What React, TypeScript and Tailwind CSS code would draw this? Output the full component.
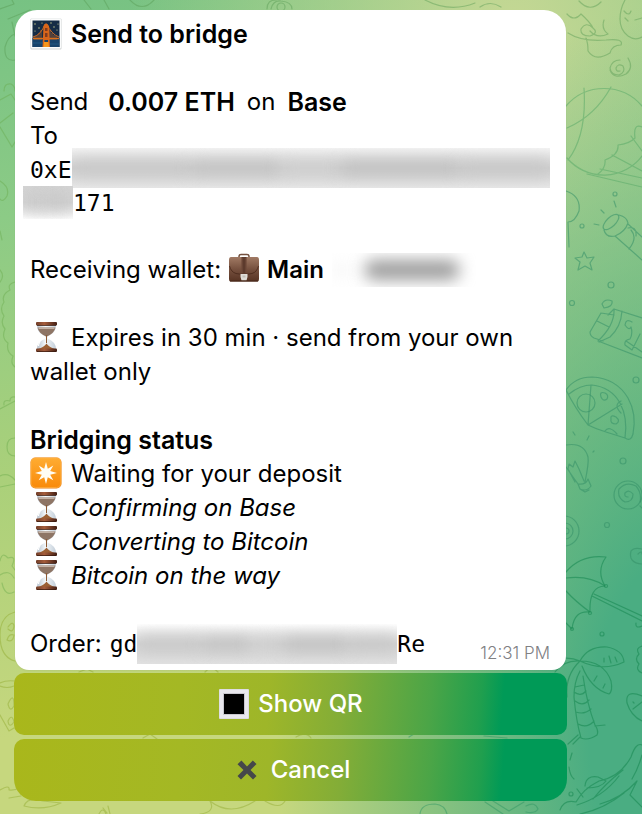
import type { ReactNode } from 'react';
import clsx from 'clsx';

const steps = ['Confirming on Base', 'Converting to Bitcoin', 'Bitcoin on the way'];

const emojiClass = '-mt-1 mb-px inline-block h-8 w-8 shrink-0 align-middle';

function BridgeEmoji() {
  return (
    <svg viewBox="0 0 32 32" className={clsx(emojiClass, 'mr-[9px]')} aria-hidden="true">
      <rect x="0.5" y="0.500" width="31" height="31" rx="1" fill="#d0d4d4" />
      <rect x="1" y="0.500" width="30" height="30" rx="1" fill="#fafbfb" />
      <rect x="2.5" y="2.500" width="27" height="26.5" fill="#152c46" />
      <rect x="2.5" y="20" width="27" height="9" fill="#17436b" />
      <g fill="#d0d394">
        <circle cx="5" cy="6" r="0.7" /><circle cx="9" cy="10" r="0.7" /><circle cx="12" cy="5" r="0.6" />
        <circle cx="21" cy="5" r="0.7" /><circle cx="24" cy="9" r="0.7" /><circle cx="28" cy="6" r="0.6" />
        <circle cx="27" cy="12" r="0.6" /><circle cx="5" cy="13" r="0.6" />
      </g>
      <g stroke="#c86a27" fill="none">
        <path d="M3 19Q11 17 15 6M17 6Q21 16 29 19" strokeWidth="1" />
        <path d="M5 18v4M7 17v5M9 15v7M11 12v10M20 12v10M22 15v7M24 17v5M26 18v4" strokeWidth="0.7" />
        <path d="M3 20.500h26" stroke="#db711b" strokeWidth="1.4" />
      </g>
      <path d="M12.500 29L13.500 8L16 5L19 8L20 29H18V22H14.500V29Z" fill="#d9651a" />
      <path d="M15 10h2.500v3h-2.500zM15 15h2.500v4h-2.500z" fill="#833b1d" />
      <path d="M14 24h4.500l.5 5h-5.500z" fill="#f4961d" />
      <path d="M3 25h10M20 26h9" stroke="#27618c" strokeWidth="0.7" />
    </svg>
  );
}

function BriefcaseEmoji() {
  return (
    <svg viewBox="0 0 32 32" className={clsx(emojiClass, 'mx-[7px]')} aria-hidden="true">
      <defs>
        <linearGradient id="leather" x1="0" y1="0" x2="0" y2="1">
          <stop offset="0" stopColor="#a17a64" />
          <stop offset="0.5" stopColor="#76503e" />
          <stop offset="1" stopColor="#573323" />
        </linearGradient>
      </defs>
      <path d="M11 6V4.500Q11 2.500 13 2.500H19Q21 2.500 21 4.500V6" fill="none" stroke="#74513f" strokeWidth="1.5" />
      <path d="M3 5H29Q31 5 31 8V27Q31 29.500 29.500 29.500H2.500Q1 29.500 1 27V8Q1 5 3 5Z" fill="url(#leather)" />
      <path d="M1.500 14Q3 20 8 21.500Q16 24 24 21.500Q29 20 30.500 14" fill="none" stroke="#472719" strokeWidth="0.8" />
      <path d="M13.500 5h5V22h-5z" fill="#5d3b2d" />
      <path d="M14 6v15M18 6v15" stroke="#8c6551" strokeWidth="0.5" />
      <path d="M12.500 22h7v3l-1 3.500h-5l-1-3.500z" fill="#e0ddd7" />
      <path d="M14.500 23.500h3v2h-3z" fill="#c4c0b8" />
      <path d="M2 29h28" stroke="#442417" />
    </svg>
  );
}

function HourglassEmoji() {
  return (
    <svg viewBox="0 0 32 32" className={clsx(emojiClass, 'mr-[9px]')} aria-hidden="true">
      <defs>
        <linearGradient id="wood" x1="0" x2="1">
          <stop offset="0" stopColor="#713e29" />
          <stop offset="0.4" stopColor="#a45c3b" />
          <stop offset="1" stopColor="#421e13" />
        </linearGradient>
        <linearGradient id="glass" x1="0" x2="1">
          <stop offset="0" stopColor="#b8c3cf" />
          <stop offset="0.45" stopColor="#f4f8fa" />
          <stop offset="1" stopColor="#c3ced9" />
        </linearGradient>
      </defs>
      <path d="M7 4H26Q26 12 17.500 15.500V17.500Q26 21 26 28H7Q7 21 15.500 17.500V15.500Q7 12 7 4Z" fill="url(#glass)" />
      <path d="M7.500 6.500H25.500Q24.500 12 17 15.500H16Q8.500 12 7.500 6.500Z" fill="#8e7565" />
      <path d="M8.500 6.500H24.500V8H8.500Z" fill="#c3b1a4" />
      <path d="M16.500 14V22" stroke="#8d5b35" strokeWidth="1" />
      <path d="M8 28Q14 26 16.500 22.500Q19 26 25 28Z" fill="#9b6034" />
      <path d="M10 21Q8.500 23 8.500 25" stroke="#fff" strokeWidth="1.2" fill="none" />
      <rect x="6" y="1" width="21" height="3.500" rx="1" fill="url(#wood)" />
      <rect x="6" y="27.500" width="21" height="3.500" rx="1" fill="url(#wood)" />
      <path d="M7 4.500h19M7 30.500h19" stroke="#35180f" strokeWidth="0.7" />
    </svg>
  );
}

function SparkEmoji() {
  return (
    <svg viewBox="0 0 32 32" className={clsx(emojiClass, 'mr-[9px]')} aria-hidden="true">
      <defs>
        <linearGradient id="spark" x1="0" y1="0" x2="0" y2="1">
          <stop offset="0" stopColor="#ffac32" />
          <stop offset="1" stopColor="#f98a0a" />
        </linearGradient>
      </defs>
      <rect x="0.500" y="0.500" width="31" height="31" rx="5" fill="#e77c13" />
      <rect x="1" y="1" width="30" height="29.500" rx="4.500" fill="url(#spark)" stroke="#ffb448" strokeWidth="0.7" />
      <path d="M16 5L17.800 11.700L23.300 8.400L20.200 13.900L27 16L20.200 17.800L23.300 23.300L17.800 20.200L16 27L14.200 20.200L8.700 23.300L11.800 17.800L5 16L11.800 13.900L8.700 8.400L14.200 11.700Z" fill="#fffdf5" />
    </svg>
  );
}

function SquareEmoji() {
  return (
    <svg viewBox="0 0 32 32" className="h-8 w-8" aria-hidden="true">
      <rect x="1" y="1" width="30" height="30" rx="1" fill="#dedde2" />
      <rect x="2" y="2" width="28" height="28" fill="#e9e8ed" />
      <rect x="5" y="5" width="22" height="22" fill="#c9c8ce" />
      <rect x="6" y="6" width="20" height="20" fill="#000" />
    </svg>
  );
}

function CrossEmoji() {
  return (
    <svg viewBox="0 0 32 32" className="h-8 w-8" aria-hidden="true">
      <path d="M10.500 6.500L16 12.500L21.800 6.500L25.500 10L19.500 16L25.500 22L22 25.500L16 19.500L10 25.500L6.500 22L12.500 16L6.500 10.200Z" fill="#45474a" />
    </svg>
  );
}

// Smudge that hides private characters
function Redacted({ className }: { className: string }) {
  return (
    <span aria-hidden="true" className={clsx('flex items-center overflow-hidden', className)}>
      <span className="h-4 flex-4 bg-[#c9c9c9] blur-[8px]" />
      <span className="h-4 flex-3 bg-[#c4c4c4] blur-[8px]" />
      <span className="h-4 flex-2 bg-[#d0d0d0] blur-[8px]" />
      <span className="h-4 flex-4 bg-[#c2c2c2] blur-[8px]" />
      <span className="h-4 flex-3 bg-[#c8c8c8] blur-[8px]" />
    </span>
  );
}

function RedactedName() {
  return (
    <span aria-hidden="true" className="ml-2 flex h-[34px] w-36 items-center overflow-hidden">
      <span className="ml-1 h-3 w-3 bg-[#f2f2f2] blur-sm" />
      <span className="ml-4 h-5 w-24 rounded-full bg-[#9c9c9c] blur-[8px]" />
    </span>
  );
}

function Wallpaper() {
  return (
    <svg
      viewBox="0 0 642 814"
      preserveAspectRatio="xMidYMid slice"
      className="absolute inset-0 h-full w-full"
      fill="none"
      strokeWidth="1.2"
      strokeLinecap="round"
      strokeLinejoin="round"
      aria-hidden="true"
    >
      {/* top edge */}
      <g stroke="#599b55" strokeOpacity="0.45">
        <path d="M8 19L30 10M12 22L15 36M5 47Q4 62 15 60M5 47Q8 36 15 34M0 9L14 4L12 0M84 0L91 9M104 0L109 9M130 0Q142 13 154 0M267 9Q267 0 276 0M271 9Q273 0 281 1Q292 2 292 9" />
        <circle cx="281" cy="7" r="4" />
        <path d="M425 0Q450 13 475 3M480 7Q490 0 501 7M568 33Q582 42 606 40Q624 38 621 45Q612 45 610 53Q595 62 588 51Q588 43 586 38M567 14Q574 22 581 14Q590 22 593 28Q599 33 590 36Q580 36 581 29Q586 21 593 28M579 1Q590 13 601 2M604 20Q601 29 608 34Q597 39 590 31M625 0Q620 9 620 19Q620 30 628 36Q635 41 642 37M624 11Q629 17 631 11M642 18L635 20M625 18L628 21" />
        <path d="M620 71Q616 72 616 68Q618 63 623 66Q626 72 619 75Q611 75 610 68Q612 60 620 60M628 58Q634 68 626 74Q614 80 610 70" />
      </g>
      {/* left edge */}
      <g stroke="#67a748" strokeOpacity="0.4">
        <path d="M4 91Q4 83 11 84Q15 86 15 91M0 100L11 94L15 100M0 123L13 113M0 127L12 147L15 142M0 181Q10 187 7 196Q3 203 0 199M0 231L2 240M0 270Q5 276 0 282M15 282Q7 284 10 290Q1 295 4 302Q-1 309 4 316Q0 323 5 329Q1 338 8 343Q6 352 13 356Q10 364 15 367M0 409L15 401M4 405Q3 399 10 401Q10 396 15 397M15 438Q7 438 7 447Q7 456 15 456M0 476Q8 472 15 480M0 487L15 484M0 561Q2 551 8 558Q17 555 12 566L15 570M0 575Q9 569 14 578M2 583Q5 597 14 592" />
      </g>
      {/* bottom edge */}
      <g stroke="#91a92e" strokeOpacity="0.45">
        <path d="M15 612Q0 616 0 635Q0 657 15 661M8 627Q13 620 14 626Q13 634 8 629M7 640Q9 633 14 635Q13 643 7 640M0 683Q6 680 15 681M0 686Q7 689 14 686M0 715L9 731L14 728M8 704Q14 691 14 706Q10 713 8 704M8 721Q12 713 14 722Q9 729 8 721M0 790Q10 784 9 790Q15 791 20 787M9 798L21 796M24 806Q28 796 43 801L61 803Q43 811 24 806M99 814Q103 806 106 814M103 808L107 813M108 806L110 814M79 672L87 669L93 672M205 672Q211 665 218 672M143 738L150 734L157 739M296 737Q306 731 311 738M210 801Q230 817 255 801M200 814Q216 812 210 801M265 801Q280 810 285 801" />
      </g>
      <g stroke="#2f9863" strokeOpacity="0.5">
        <path d="M420 814Q421 804 435 804Q445 805 447 814M485 802L503 814M493 801L509 811L524 802M526 806Q535 801 538 809Q535 814 526 812M409 737L414 734M484 736L507 738" />
      </g>
      {/* balloon */}
      <g stroke="#54a766" strokeOpacity="0.5">
        <path d="M566 106A50 50 0 0 1 642 106M567 128Q595 116 611 87M584 88Q587 135 568 160M567 158A48 48 0 0 0 642 156M642 127Q633 123 635 138Q629 144 618 145Q619 155 605 160Q606 168 598 174M631 136L642 151M612 155L642 171M600 169L642 178M587 174L642 187" />
      </g>
      <g stroke="#348f67" strokeOpacity="0.55">
        {/* mushroom and star */}
        <path d="M566 191Q581 196 579 211Q575 222 568 222L569 247M584 252L587 258L594 257L590 263L592 270L585 266L578 270L580 262L575 258L582 257Z" />
        {/* torch */}
        <ellipse cx="611" cy="222" rx="10" ry="4.500" transform="rotate(-44 611 222)" />
        <path d="M604 230Q606 238 615 236M619 215Q627 217 628 223Q625 232 615 236L642 260M628 224L642 237M628 228Q637 226 636 236M631 230Q638 238 629 249M614 201L616 207M601 210L604 213M594 224L599 225" />
        <circle cx="615" cy="194" r="2" /><circle cx="582" cy="226" r="2" /><circle cx="611" cy="285" r="3" /><circle cx="572" cy="303" r="2.500" />
        {/* chocolate bar */}
        <path d="M602 304Q605 298 612 301Q613 307 604 308ZM601 313L614 315M601 313L590 332Q590 336 594 338L603 341M597 321L609 327M614 309L608 315M614 309L642 318M614 309Q615 325 598 341L642 358M622 311Q621 327 610 337L599 342M626 341L632 345L642 352M632 322Q626 318 625 325Q629 331 631 327Q633 334 630 339Q624 340 625 345L632 350L640 334" />
        {/* pizza slice */}
        <path d="M566 390Q575 377 592 377Q616 378 628 398Q637 414 633 434Q631 442 625 438L606 432Q596 429 588 425Q575 408 566 390M569 394Q580 385 592 385Q611 387 620 403Q628 418 625 438M591 385L588 425L622 404M601 397Q599 391 605 393Q609 395 607 399Q603 402 601 397M611 419Q610 414 616 417Q621 421 616 424Q610 424 611 419M605 431Q609 425 617 434M621 401Q613 405 621 413" />
        <circle cx="586" cy="403" r="9" />
        <circle cx="636" cy="380" r="3" />
        {/* bulb */}
        <path d="M566 445Q584 442 588 457Q589 463 585 482M566 467L578 484M568 469L569 464L573 467L575 461L579 469L584 481M568 469L575 482M578 484Q586 485 588 479L591 486Q587 492 580 489ZM580 489L585 492L589 490M573 432L575 435M589 436L587 440M593 452L594 451" />
        <circle cx="623" cy="461" r="3" /><circle cx="607" cy="525" r="2.500" />
        {/* lollipops */}
        <circle cx="564" cy="531" r="15" /><circle cx="565" cy="531" r="8" /><circle cx="566" cy="531" r="3" />
        <circle cx="628" cy="495" r="14" />
        <path d="M628 497Q624 497 625 493Q629 489 633 494Q633 502 625 502Q617 498 619 489Q626 481 636 486Q642 493 640 502M640 506L642 508M638 554Q642 550 642 554M642 564Q628 563 631 551Q634 547 642 549" />
      </g>
      <g stroke="#168650" strokeOpacity="0.55">
        {/* parasol */}
        <path d="M566 572Q581 554 606 557Q596 571 605 586Q589 586 590 612Q574 610 572 629M566 578Q589 575 605 586M566 591Q576 602 590 612M592 596L642 621M594 594L642 616M566 623L572 629M636 623Q635 629 642 626" />
        <circle cx="606" cy="586" r="1.500" /><circle cx="590" cy="613" r="1.500" /><circle cx="572" cy="629" r="1.500" /><circle cx="602" cy="634" r="2" />
        {/* palm */}
        <path d="M580 661Q588 646 607 647Q623 650 624 662Q603 672 580 661Q568 656 556 660M580 661Q564 660 555 672M580 661Q604 661 611 681Q613 691 609 694Q591 689 582 666M580 661Q565 675 567 697M580 671Q574 682 574 697Q576 720 581 738Q588 741 597 735Q599 731 595 725Q587 704 583 676M575 687L584 685M574 692Q581 697 586 691M575 701Q583 707 589 700M576 712Q584 715 591 709M578 724Q587 729 594 721M573 744L580 737M568 744L578 735M595 726L605 725M604 662L604 658M611 663L609 656M617 662L615 657M594 681L597 676M603 688L605 684" />
        <path d="M642 646Q635 648 639 654Q634 659 639 664Q635 670 642 673M642 696Q625 689 627 703Q631 716 642 721M633 702L634 703M633 709L642 702" />
        {/* dolphin */}
        <path d="M572 753L570 760M569 767Q570 776 574 779M577 789L583 797M585 786Q586 775 598 777L606 781Q601 788 587 788M560 810Q564 799 576 802Q583 789 599 781Q620 777 631 757Q636 742 642 745M642 755Q638 769 632 779M577 805Q603 797 619 776M593 799Q605 784 623 770M600 804Q622 798 637 781L630 795L642 807M580 814Q604 809 624 793" />
        <circle cx="571" cy="794" r="2" />
      </g>
    </svg>
  );
}

function ReplyButton({ children, last = false }: { children: ReactNode; last?: boolean }) {
  return (
    <button
      type="button"
      className={clsx(
        'flex h-[62px] w-full items-center justify-center gap-2 rounded-[10px] text-2xl font-medium text-white',
        'bg-[linear-gradient(95deg,#a9b71b_0%,#a4b824_30%,#9eb629_46%,#83ad37_59%,#4ba547_75%,#209f4e_84%,#009a57_88%,#009a57_100%)]',
        last && 'rounded-b-[22px]',
      )}
    >
      {children}
    </button>
  );
}

export default function App() {
  return (
    <div className="relative min-h-screen overflow-hidden bg-[radial-gradient(ellipse_65%_90%_at_108%_90%,#4aad82_0%,#4aad82_25%,transparent_100%),radial-gradient(ellipse_60%_70%_at_80%_5%,#c6d894_0%,transparent_100%),linear-gradient(175deg,#77c283_0%,#8ccb86_25%,#aad07a_55%,#c6d77e_85%)] font-['Inter',sans-serif] text-black">
      <Wallpaper />
      <main className="relative pt-[10px] pr-[75px] pb-3 pl-[14px]">
        <article className="mx-px rounded-t-[22px] rounded-b-[14px] bg-white pt-[7px] pr-4 pb-[9px] pl-[15px] text-2xl leading-[34px] shadow-xs">
          <h1 className="text-[25px] leading-[34px] font-semibold"><BridgeEmoji />Send to bridge</h1>

          <div className="mt-[34px]">
            <p className="flex gap-3">
              <span className="mr-2">Send</span>
              <b className="text-[25px] font-semibold">0.007 ETH</b>
              <span>on</span>
              <b className="text-[25px] font-semibold">Base</b>
            </p>
            <p>To</p>
            <div className="font-['DejaVu_Sans_Mono',monospace] text-[23px]">
              <p className="flex h-[33px] items-center">
                0xE<Redacted className="-mt-1 h-10 flex-1 bg-linear-to-b from-[#f4f4f4] via-[#d0d0d0] to-[#e8e8e8]" />
              </p>
              <p className="flex h-[33px] items-center">
                <Redacted className="-ml-[7px] h-[33px] w-[50px] bg-linear-to-b from-[#d4d4d4] via-[#d6d6d6] to-white" />171
              </p>
            </div>
          </div>

          <p className="mt-[34px] flex items-center">
            Receiving wallet:<BriefcaseEmoji /><b className="font-semibold">Main</b>
            <RedactedName />
          </p>

          <p className="mt-[34px]"><HourglassEmoji />Expires in 30 min · send from your own wallet only</p>

          <section className="mt-[34px]">
            <h2 className="text-[25px] leading-[34px] font-semibold">Bridging status</h2>
            <ul>
              <li><SparkEmoji />Waiting for your deposit</li>
              {steps.map(step => (
                <li key={step} className="italic"><HourglassEmoji />{step}</li>
              ))}
            </ul>
          </section>

          <div className="mt-[34px] flex h-[34px] items-center">
            <span>Order:</span>
            <span className="ml-2 font-['DejaVu_Sans_Mono',monospace] text-[23px]">gd</span>
            <Redacted className="h-10 w-[260px] bg-linear-to-b from-white via-[#d4d4d4] to-[#e2e2e2]" />
            <span className="font-['DejaVu_Sans_Mono',monospace] text-[23px]">Re</span>
            <time className="ml-auto self-end text-[17px] leading-4 font-light text-[#808083]">12:31 PM</time>
          </div>
        </article>

        <div className="mt-[3px] flex flex-col gap-1">
          <ReplyButton><SquareEmoji />Show QR</ReplyButton>
          <ReplyButton last><CrossEmoji />Cancel</ReplyButton>
        </div>
      </main>
    </div>
  );
}
